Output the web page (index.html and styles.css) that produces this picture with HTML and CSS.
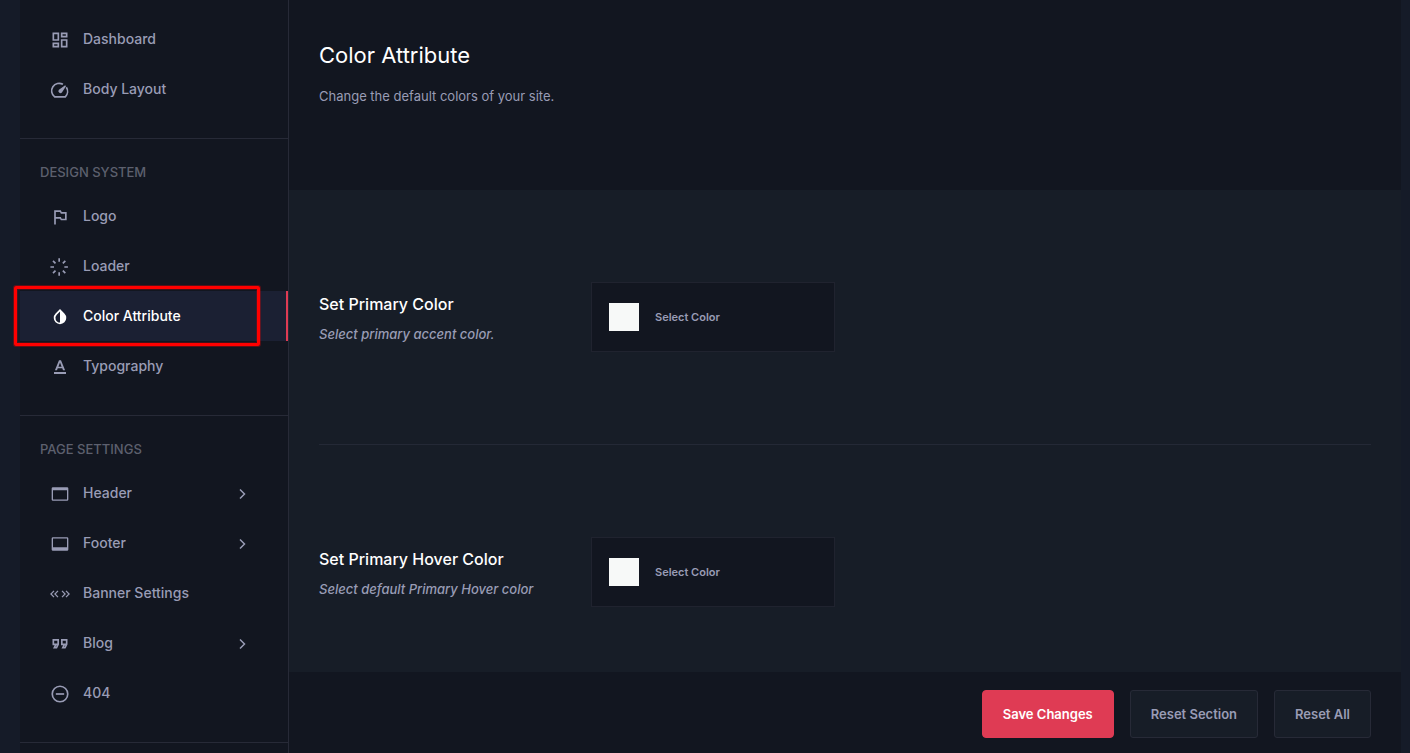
FILE: index.html
```
<!DOCTYPE html>
<html lang="en">
<head>
    <meta charset="UTF-8">
    <meta name="viewport" content="width=device-width, initial-scale=1.0">
    <title>Color Attribute</title>
    <link rel="stylesheet" href="styles.css">
</head>
<body>
    <div class="panel">
        <nav class="sidebar">
            <div class="nav-group">
                <a href="#" class="nav-link">
                    <svg class="icon" viewBox="0 0 24 24"><path d="M13 21V11h8v10h-8zM3 13V3h8v10H3zm6-2V5H5v6h4zM3 21v-6h8v6H3zm2-2h4v-2H5v2zm10 0h4v-6h-4v6zM13 3h8v6h-8V3zm2 2v2h4V5h-4z"/></svg>
                    Dashboard
                </a>
                <a href="#" class="nav-link">
                    <svg class="icon line" viewBox="0 0 24 24"><path d="M15.5 5.2A9 9 0 0 0 5.600 20.2H18.4A9 9 0 0 0 19.6 8.8"/><path class="solid" d="M18.2 6.4l1 1-4.900 7.500a2.300 2.300 0 1 1-3.600-3.200z"/></svg>
                    Body Layout
                </a>
            </div>

            <div class="nav-group">
                <h2 class="nav-title">DESIGN SYSTEM</h2>
                <a href="#" class="nav-link">
                    <svg class="icon" viewBox="0 0 24 24"><path d="M14 6l-1-2H5v17h2v-7h5l1 2h7V6h-6zm4 8h-4l-1-2H7V6h5l1 2h5v6z"/></svg>
                    Logo
                </a>
                <a href="#" class="nav-link">
                    <svg class="icon line" viewBox="0 0 24 24"><path d="M11 1.500v4.300M11 18.200v4.300M.5 12h4.300M17.200 12h4.300M3.600 4.600l3 3M15.400 16.400l3 3M3.600 19.400l3-3M15.400 7.600l3-3"/></svg>
                    Loader
                </a>
                <a href="#" class="nav-link active">
                    <svg class="icon" viewBox="0 0 24 24"><path fill-rule="evenodd" d="M12 2.500l5.300 5.300a7.500 7.500 0 1 1-10.600 0zM12 5.300L8.100 9.200a5.500 5.500 0 0 0 3.900 9.400z"/></svg>
                    Color Attribute
                </a>
                <a href="#" class="nav-link">
                    <svg class="icon" viewBox="0 0 24 24"><path d="M4.800 18h14.400v2.400H4.800zM10.800 4h2.400l4.900 12h-2.500l-.9-2.400H9.300L8.400 16H5.900zM10.100 11.600h3.800L12 6.500z" fill-rule="evenodd"/></svg>
                    Typography
                </a>
            </div>

            <div class="nav-group">
                <h2 class="nav-title">PAGE SETTINGS</h2>
                <a href="#" class="nav-link">
                    <svg class="icon" viewBox="0 0 24 24"><path fill-rule="evenodd" d="M3.500 4h17A1.500 1.500 0 0 1 22 5.500v13a1.500 1.500 0 0 1-1.500 1.500h-17A1.500 1.500 0 0 1 2 18.500v-13A1.500 1.500 0 0 1 3.500 4zM3.600 7.500v11h16.800v-11z"/></svg>
                    Header
                    <svg class="arrow" viewBox="0 0 12 12"><path d="M4 1.500l4.500 4.500L4 10.500"/></svg>
                </a>
                <a href="#" class="nav-link">
                    <svg class="icon" viewBox="0 0 24 24"><path fill-rule="evenodd" d="M3.500 4h17A1.500 1.500 0 0 1 22 5.500v13a1.500 1.500 0 0 1-1.500 1.500h-17A1.500 1.500 0 0 1 2 18.500v-13A1.500 1.500 0 0 1 3.500 4zM3.600 5.500V16h16.800V5.500z"/></svg>
                    Footer
                    <svg class="arrow" viewBox="0 0 12 12"><path d="M4 1.500l4.500 4.500L4 10.500"/></svg>
                </a>
                <a href="#" class="nav-link">
                    <svg class="icon thin" viewBox="0 0 24 24"><path d="M4.800 8.300L1.100 12l3.700 3.700M9.600 8.300L5.900 12l3.700 3.700M14.400 8.300l3.700 3.700-3.700 3.700M19.200 8.300l3.700 3.700-3.700 3.700"/></svg>
                    Banner Settings
                </a>
                <a href="#" class="nav-link">
                    <svg class="icon line" viewBox="0 0 24 24"><path d="M9.800 12.500H4V7h5.800v5.500l-2 4H5.200l2-4M20 12.500h-5.800V7H20v5.500l-2 4h-2.600l2-4"/></svg>
                    Blog
                    <svg class="arrow" viewBox="0 0 12 12"><path d="M4 1.500l4.500 4.500L4 10.500"/></svg>
                </a>
                <a href="#" class="nav-link">
                    <svg class="icon line" viewBox="0 0 24 24"><circle cx="12" cy="12" r="9.300"/><path d="M7 12h10"/></svg>
                    404
                </a>
            </div>
        </nav>

        <main class="content">
            <header class="content-header">
                <h1>Color Attribute</h1>
                <p>Change the default colors of your site.</p>
            </header>

            <div class="fields">
                <div class="field">
                    <div class="field-label">
                        <h3 id="primaryLabel">Set Primary Color</h3>
                        <p>Select primary accent color.</p>
                    </div>
                    <button type="button" class="color-btn" aria-describedby="primaryLabel">
                        <span class="swatch"></span>
                        Select Color
                    </button>
                </div>
                <div class="field">
                    <div class="field-label">
                        <h3 id="hoverLabel">Set Primary Hover Color</h3>
                        <p>Select default Primary Hover color</p>
                    </div>
                    <button type="button" class="color-btn" aria-describedby="hoverLabel">
                        <span class="swatch"></span>
                        Select Color
                    </button>
                </div>
            </div>

            <footer class="actions">
                <button type="submit" class="btn btn-save">Save Changes</button>
                <button type="button" class="btn">Reset Section</button>
                <button type="button" class="btn">Reset All</button>
            </footer>
        </main>
    </div>
</body>
</html>
```
FILE: styles.css
```
* {
    box-sizing: border-box;
}

body {
    margin: 0;
    font-family: Inter, "Liberation Sans", sans-serif;
    background: #151b28;
    color: #999cb5;
}

h1, h2, h3, p {
    margin: 0;
}

.panel {
    display: flex;
    height: 100vh;
    padding: 0 9px 0 20px;
    overflow: hidden;
}

.sidebar {
    flex: 0 0 269px;
    background: #121620;
    border-right: 1px solid #272a37;
}

.nav-group {
    padding: 24px 0;
    border-bottom: 1px solid #272a37;
}

.nav-group:first-child {
    padding-top: 14px;
}

.nav-title {
    padding: 0 20px 10px;
    font-size: 13px;
    line-height: 18px;
    font-weight: 500;
    color: #5d606e;
}

.nav-link {
    position: relative;
    display: flex;
    align-items: center;
    gap: 13px;
    height: 50px;
    padding: 0 40px 2px 30px;
    font-size: 14px;
    font-weight: 500;
    color: #999cb5;
    text-decoration: none;
}

.nav-link.active {
    background: #1b2033;
    border-right: 2px solid #df3b54;
    color: #fff;
}

/* red highlight frame around the current page */
.nav-link.active::after {
    content: "";
    position: absolute;
    top: -5px;
    right: 26px;
    bottom: -5px;
    left: -6px;
    border: 3px solid #f00;
    border-radius: 2px;
    box-shadow: 0 0 0 1px rgba(255, 0, 0, 0.3), inset 0 0 0 1px rgba(255, 0, 0, 0.2);
}

.icon {
    width: 20px;
    height: 20px;
    margin-top: 4px;
    fill: currentColor;
}

.icon.line,
.icon.thin {
    fill: none;
    stroke: currentColor;
    stroke-width: 2;
}

.icon.thin {
    stroke-width: 1.5;
}

.icon .solid {
    fill: currentColor;
    stroke: none;
}

.arrow {
    width: 12px;
    height: 12px;
    margin: 4px 0 0 auto;
    fill: none;
    stroke: currentColor;
    stroke-width: 1.5;
}

.content {
    flex: 1;
    min-width: 0;
    display: flex;
    flex-direction: column;
    background: #171d27;
}

.content-header {
    flex: none;
    min-height: 190px;
    padding: 40px 30px;
    background: #121620;
}

.content-header h1 {
    font-size: 22px;
    line-height: 30px;
    font-weight: 400;
    color: #fff;
}

.content-header p {
    margin-top: 16px;
    font-size: 13px;
    line-height: 20px;
}

.fields {
    flex: 1;
    min-height: 0;
    padding: 0 30px;
    overflow: hidden;
}

.field {
    display: flex;
    align-items: center;
    padding: 92px 0;
    border-bottom: 1px solid #242936;
}

.field-label {
    width: 272px;
    padding-top: 2px;
}

.field-label h3 {
    font-size: 16px;
    line-height: 24px;
    font-weight: 500;
    color: #fff;
}

.field-label p {
    margin-top: 8px;
    font-size: 13px;
    line-height: 20px;
    font-weight: 500;
    font-style: italic;
}

.color-btn {
    display: flex;
    align-items: center;
    gap: 16px;
    width: 244px;
    height: 70px;
    padding: 0 17px;
    background: #121620;
    border: 1px solid #20232f;
    font-family: inherit;
    font-size: 11px;
    font-weight: 600;
    color: #999cb5;
    cursor: pointer;
}

.swatch {
    width: 30px;
    height: 28px;
    background: #f7f9f8;
}

.actions {
    flex: none;
    display: flex;
    justify-content: flex-end;
    gap: 16px;
    padding: 18px 30px 15px;
    background: #121620;
}

.btn {
    height: 48px;
    padding: 0 20px;
    background: #171d27;
    border: 1px solid #272a37;
    border-radius: 3px;
    font-family: inherit;
    font-size: 13px;
    font-weight: 600;
    color: #999cb5;
    cursor: pointer;
}

.btn-save {
    background: #df3b54;
    border-color: #df3b54;
    border-radius: 4px;
    color: #fff;
}
```
